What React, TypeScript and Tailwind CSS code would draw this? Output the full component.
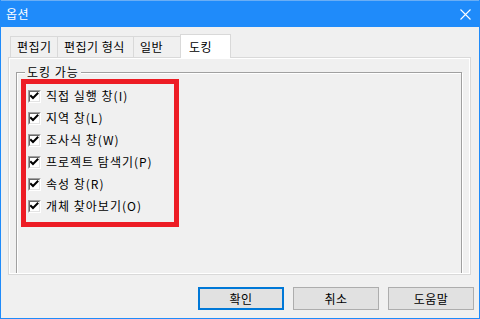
const font = { fontFamily: '"Noto Sans CJK KR", "Noto Sans", sans-serif' };

const tabs = [
  { label: "편집기", w: "w-[47px]" },
  { label: "편집기 형식", w: "w-[76px]" },
  { label: "일반", w: "w-[47px]" },
];

const items = [
  "직접 실행 창(I)",
  "지역 창(L)",
  "조사식 창(W)",
  "프로젝트 탐색기(P)",
  "속성 창(R)",
  "개체 찾아보기(O)",
];

function CheckBox() {
  return (
    <span className="w-[13px] h-[13px] border-l border-t border-[#a0a0a0] border-r-white border-b-white border-r border-b flex">
      <span className="flex-1 flex items-center justify-center bg-white border-l border-t border-[#696969] border-r-[#e3e3e3] border-b-[#e3e3e3] border-r border-b">
        <svg width="9" height="9" viewBox="0 0 9 9">
          <path d="M1 4 L3 6 L7.5 1.5" stroke="#000" strokeWidth="2" fill="none" strokeLinecap="square" />
        </svg>
      </span>
    </span>
  );
}

function Btn({ label, primary }: { label: string; primary?: boolean }) {
  return (
    <button
      className={
        "w-[86px] h-[23px] bg-[#e1e1e1] text-[12px] tracking-[0.5px] text-black flex items-center justify-center " +
        (primary ? "border-2 border-[#0078d7]" : "border border-[#adadad]")
      }
    >
      {label}
    </button>
  );
}

export default function App() {
  return (
    <div
      className="relative w-[480px] h-[319px] bg-[#f0f0f0] border-l border-r border-b border-[#1f8bfa] flex flex-col overflow-hidden"
      style={font}
    >
      {/* title bar */}
      <div className="h-[27px] -mx-px bg-[#1f8bfa] border-t border-[#6aaef5] flex items-center justify-between pl-[6px] pr-[9px] shrink-0">
        <span className="text-white text-[12px] tracking-[0.5px] leading-none">옵션</span>
        <svg width="11" height="11" viewBox="0 0 11 11">
          <path d="M0.5 0.5 L10.5 10.5 M10.5 0.5 L0.5 10.5" stroke="#fff" strokeWidth="1.1" />
        </svg>
      </div>

      <div className="pl-[7px]">
        {/* tabs */}
        <div className="mt-[7px] h-[23px] flex items-end pl-[2px] text-[12px] tracking-[0.5px] text-black">
          {tabs.map((t) => (
            <div
              key={t.label}
              className={t.w + " h-[21px] border-t border-l border-[#d9d9d9] flex items-center pl-[6px] leading-none"}
            >
              {t.label}
            </div>
          ))}
          <div className="w-[51px] h-[24px] -mb-px relative z-10 bg-white border-t border-l border-r border-[#d9d9d9] flex items-center pl-[8px] leading-none">
            도킹
          </div>
        </div>

        {/* panel */}
        <div className="w-[463px] h-[218px] border border-[#d9d9d9] bg-white p-px overflow-hidden">
          <div className="h-full bg-[#f0f0f0] pl-[6px] pt-[13px] overflow-hidden">
            <div className="relative w-[446px] h-[260px] border border-[#a0a0a0] shadow-[inset_1px_1px_0_#fff,1px_1px_0_#fff] pl-[11px] pt-[12px]">
              <span className="absolute left-[8px] -top-[9px] px-[2px] bg-[#f0f0f0] text-[12px] tracking-[1px] text-black leading-[16px]">
                도킹 가능
              </span>
              {items.map((it) => (
                <div key={it} className="h-[22px] flex items-center gap-[5px] text-[12px] text-black">
                  <CheckBox />
                  <span className="leading-none tracking-[1px]">{it}</span>
                </div>
              ))}
            </div>
          </div>
        </div>

        {/* buttons */}
        <div className="mt-[12px] flex justify-end gap-[9px] pr-[5px]">
          <Btn label="확인" primary />
          <Btn label="취소" />
          <Btn label="도움말" />
        </div>
      </div>

      {/* red annotation box */}
      <div className="absolute left-[20px] top-[79px] w-[158px] h-[148px] border-[5px] border-[#ed1c24] pointer-events-none" />
    </div>
  );
}
